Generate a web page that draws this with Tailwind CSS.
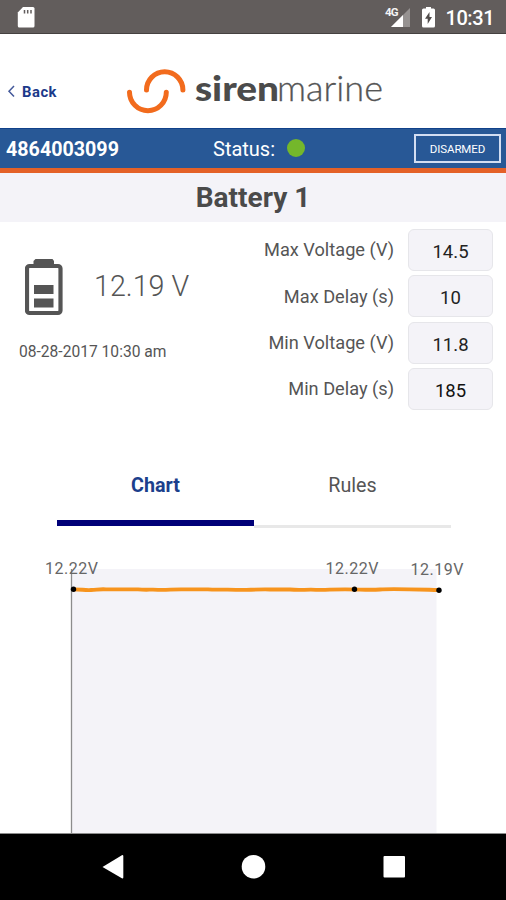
<!DOCTYPE html>
<html lang="en">
<head>
    <meta charset="UTF-8">
    <meta name="viewport" content="width=device-width, initial-scale=1.0">
    <title>Siren Marine - Battery 1</title>
    <script src="https://cdn.jsdelivr.net/npm/@tailwindcss/browser@4"></script>
</head>
<body class="w-[506px] h-[900px] overflow-hidden flex flex-col bg-white font-['Roboto',sans-serif] text-[#555]">

    <!-- Android status bar -->
    <div class="h-[34px] shrink-0 bg-[#625d5c] border-b border-[#454140]">
        <svg class="block" width="506" height="33" viewBox="0 0 506 33">
            <path d="M23 7H33a1.5 1.5 0 0 1 1.5 1.5V26a1.5 1.5 0 0 1-1.5 1.5H19.3a1.5 1.5 0 0 1-1.5-1.5V12.500z" fill="#fff"/>
            <path d="M24.500 10v3.500M27.700 10v3.500M31 10v3.500" stroke="#625d5c" stroke-width="1.500"/>
            <path d="M410 8V27H391z" fill="#969291"/>
            <path d="M403 15V27H391z" fill="#fff"/>
            <text x="385" y="16.200" font-size="11.500" font-weight="700" letter-spacing="-0.900" fill="#f4f4f4">4G</text>
            <path d="M426 7h5v1.500h2.500q1.500 0 1.500 1.500V26q0 1.500-1.500 1.500h-10q-1.500 0-1.500-1.500V10q0-1.500 1.500-1.500H426z" fill="#fff"/>
            <path d="M429.500 12L425 18.800h2.700V24l4.300-7h-2.500z" fill="#514c4b"/>
            <text x="445.500" y="25.300" font-size="20" font-weight="500" fill="#fff" textLength="49">10:31</text>
        </svg>
    </div>

    <!-- Header -->
    <header class="h-[94px] shrink-0 flex items-center">
        <svg class="block" width="506" height="94" viewBox="0 34 506 94">
            <path d="M14 86L9 91.300L14 96.600" fill="none" stroke="#43589a" stroke-width="1.500"/>
            <text x="22" y="96.500" font-size="14.800" font-weight="700" fill="#1c3a8a" textLength="34.500">Back</text>
            <path d="M129.500 92.300a18.400 18.400 0 0 0 36.800 0" fill="none" stroke="#f26b1d" stroke-width="5" stroke-linecap="round"/>
            <path d="M146.500 90a18.200 18.200 0 0 1 36.400 0" fill="none" stroke="#f26b1d" stroke-width="5" stroke-linecap="round"/>
            <g font-family="Lato, sans-serif" font-size="34.500">
                <text x="195" y="101.200" font-weight="900" fill="#4b4b4b" textLength="84" lengthAdjust="spacingAndGlyphs">siren</text>
                <text x="277" y="101.200" font-weight="300" fill="#555" stroke="#555" stroke-width="0.300" textLength="106" lengthAdjust="spacingAndGlyphs">marine</text>
            </g>
        </svg>
    </header>

    <!-- Device / alarm status -->
    <div class="h-[45px] shrink-0 flex items-center bg-[#285896] border-t border-t-[#10418a] border-b-[5px] border-b-[#e46128] pl-1.5 pr-[5px] text-white">
        <span class="w-[207px] pt-0.5 text-[19.7px] font-bold">4864003099</span>
        <span class="w-[74px] pt-px text-[20px]">Status:</span>
        <span class="size-[18px] rounded-full bg-[#74b72b] -mt-px"></span>
        <span class="ml-auto w-[87px] h-[29px] border-2 border-[#d3def2] flex items-center justify-center pt-0.5 text-[11.5px] tracking-[-0.1px]">DISARMED</span>
    </div>

    <h1 class="h-[49px] shrink-0 bg-[#f4f3f8] text-center text-[28px] leading-[49px] font-bold text-[#4a4a4a]">Battery 1</h1>

    <!-- Reading and thresholds -->
    <section class="h-[235px] shrink-0 flex">
        <div class="w-[230px] pl-[19px] pt-9">
            <div class="flex items-center">
                <svg class="ml-1.5" width="38" height="58" viewBox="0 0 38 58">
                    <path d="M10.500 1h17l1.500 2v5H8.500v-5z" fill="#555"/>
                    <rect x="2" y="8" width="33.500" height="47" rx="2.500" fill="none" stroke="#555" stroke-width="4.200"/>
                    <path d="M9 27h19.500v9H9zM9 40.500h19.500v9H9z" fill="#555"/>
                </svg>
                <span class="ml-[31px] text-[28.7px] font-light whitespace-nowrap">12.19 V</span>
            </div>
            <p class="mt-6 text-[15.6px] leading-6">08-28-2017 10:30 am</p>
        </div>
        <div class="flex-1 pt-[7px] pr-[13px]">
            <div class="flex justify-end items-center h-[42px] mb-[4.3px]">
                <span class="mr-3.5 text-[18.2px]">Max Voltage (V)</span>
                <span class="w-[85px] h-[42px] rounded-md border border-[#e6e6ea] bg-[#f4f3f8] text-center leading-[44px] text-[18.5px] text-[#222]">14.5</span>
            </div>
            <div class="flex justify-end items-center h-[42px] mb-[4.3px]">
                <span class="mr-3.5 text-[18.2px]">Max Delay (s)</span>
                <span class="w-[85px] h-[42px] rounded-md border border-[#e6e6ea] bg-[#f4f3f8] text-center leading-[44px] text-[18.5px] text-[#222]">10</span>
            </div>
            <div class="flex justify-end items-center h-[42px] mb-[4.3px]">
                <span class="mr-3.5 text-[18.2px]">Min Voltage (V)</span>
                <span class="w-[85px] h-[42px] rounded-md border border-[#e6e6ea] bg-[#f4f3f8] text-center leading-[44px] text-[18.5px] text-[#222]">11.8</span>
            </div>
            <div class="flex justify-end items-center h-[42px]">
                <span class="mr-3.5 text-[18.2px]">Min Delay (s)</span>
                <span class="w-[85px] h-[42px] rounded-md border border-[#e6e6ea] bg-[#f4f3f8] text-center leading-[44px] text-[18.5px] text-[#111]">185</span>
            </div>
        </div>
    </section>

    <!-- Tabs -->
    <nav class="h-[71px] shrink-0 ml-[57px] flex text-center text-[19.7px]">
        <div class="w-[197px] h-[69px] border-b-[6px] border-[#000078] leading-[58px] font-bold text-[#1c3f8c]">Chart</div>
        <div class="w-[197px] h-[71px] border-b-[3px] border-[#e8e8e8] leading-[58px]">Rules</div>
    </nav>

    <!-- Voltage chart -->
    <svg class="block shrink-0" width="506" height="305" viewBox="0 528 506 305">
        <rect x="72" y="569" width="364.500" height="264" fill="#f4f3f8"/>
        <path d="M71.500 569V833" stroke="#8c8c8c" stroke-width="1.300"/>
        <path d="M73 589.300C82 589.300 84 590.300 91 590S98 589 106 589.300H138C146 590.300 150 589.300 158 589.800S172 589.200 182 589.300H208C216 590.300 224 589.200 236 589.800S252 589.200 270 589.500H290C300 590.500 306 589.300 316 589.800S330 589.300 345 589.300S368 590.300 380 589.500S410 589.300 438 590" fill="none" stroke="#f7941d" stroke-width="3.800"/>
        <g fill="#000">
            <circle cx="73.500" cy="589.300" r="2.700"/>
            <circle cx="354.500" cy="589.300" r="2.700"/>
            <circle cx="439" cy="590.200" r="2.700"/>
        </g>
        <g font-size="16" fill="#666">
            <text x="45" y="573.500" textLength="53">12.22V</text>
            <text x="325.500" y="573.500" textLength="53">12.22V</text>
            <text x="410.500" y="574.500" textLength="53">12.19V</text>
        </g>
    </svg>

    <!-- Android navigation bar -->
    <div class="h-[67px] shrink-0 bg-black border-t border-[#8c8c8c]">
        <svg class="block" width="506" height="66" viewBox="0 834 506 66" fill="#fff">
            <path d="M102.500 867L122.300 855q1 0 1 1V877.500q0 1-1 1z"/>
            <circle cx="253.500" cy="866.700" r="11.800"/>
            <rect x="383.500" y="856" width="21.500" height="21.500" rx="1"/>
        </svg>
    </div>

</body>
</html>
